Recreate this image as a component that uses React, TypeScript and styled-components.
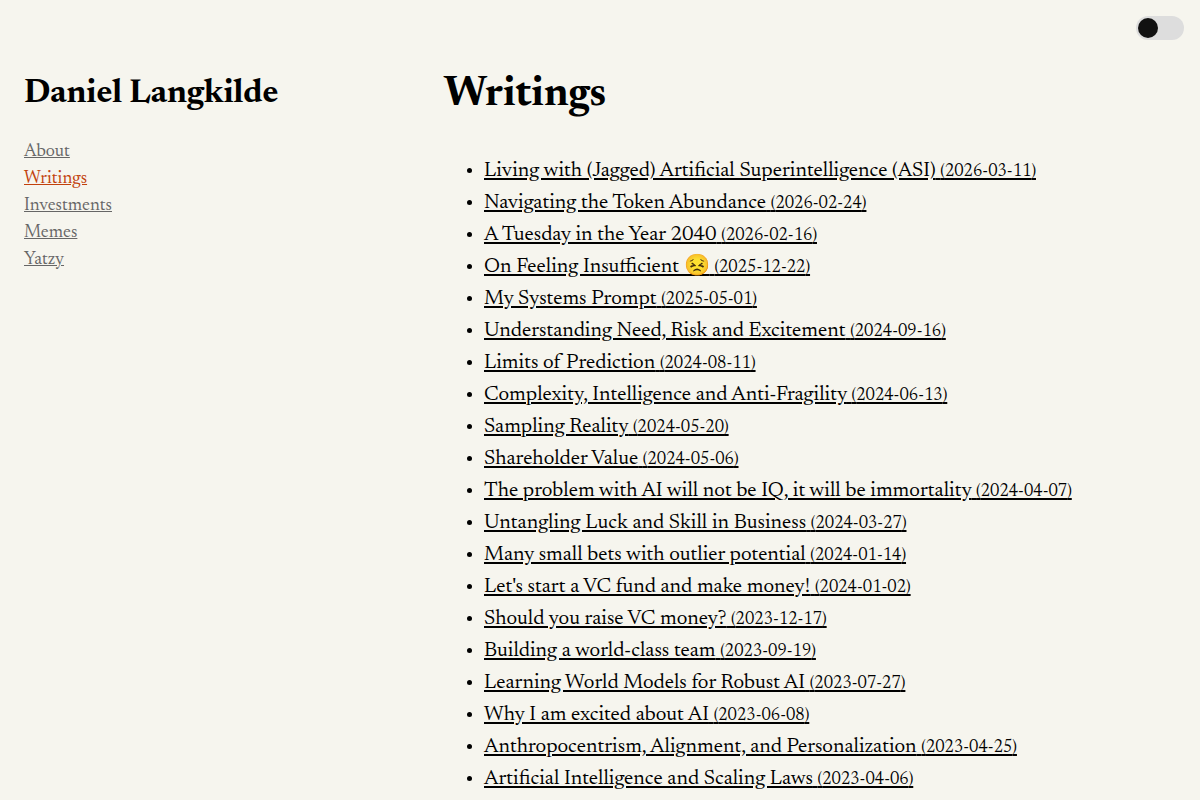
import React, { useState } from "react";
import styled, { createGlobalStyle } from "styled-components";

const GlobalStyle = createGlobalStyle`
  *, *::before, *::after { box-sizing: border-box; }
  body {
    margin: 0;
    background: #f6f5ee;
    color: #000;
    font-family: Newsreader, "Liberation Serif", serif;
    font-size: 21px;
    line-height: 32px;
  }
`;

const Page = styled.div`
  display: grid;
  grid-template-columns: 35vw 1fr;
  min-height: 100vh;
  padding: 65px 24px 0;
`;

const Sidebar = styled.aside`
  min-width: 0;
`;

const SiteName = styled.h1`
  margin: 8px 0 24px;
  font-size: 34px;
  line-height: 42px;
  font-weight: 700;
`;

const Nav = styled.nav`
  display: flex;
  flex-direction: column;
  align-items: flex-start;
`;

const NavLink = styled.a<{ $active?: boolean }>`
  color: ${(p) => (p.$active ? "#c2410c" : "#666")};
  font-size: 18px;
  line-height: 27px;
`;

const Main = styled.main`
  min-width: 0;
`;

const Title = styled.h2`
  margin: 0 0 31px;
  font-size: 42px;
  line-height: 60px;
  font-weight: 700;
`;

const List = styled.ul`
  margin: 0;
  padding-left: 40px;
`;

const Item = styled.li`
  line-height: 32px;
`;

const PostLink = styled.a`
  color: inherit;
`;

const PostDate = styled.span`
  font-size: 17px;
  line-height: 20px;
`;

const Switch = styled.label`
  position: absolute;
  top: 16px;
  right: 16px;
  display: flex;
`;

const Toggle = styled.input`
  appearance: none;
  width: 48px;
  height: 24px;
  margin: 0;
  padding: 2px;
  border-radius: 12px;
  background: #ddd;
  cursor: pointer;

  &::before {
    content: "";
    display: block;
    width: 20px;
    height: 20px;
    border-radius: 50%;
    background: #111;
  }
  &:checked::before { margin-left: auto; }
`;

const pages = ["About", "Writings", "Investments", "Memes", "Yatzy"];

const posts: [string, string][] = [
  ["Living with (Jagged) Artificial Superintelligence (ASI)", "2026-03-11"],
  ["Navigating the Token Abundance", "2026-02-24"],
  ["A Tuesday in the Year 2040", "2026-02-16"],
  ["On Feeling Insufficient 😣", "2025-12-22"],
  ["My Systems Prompt", "2025-05-01"],
  ["Understanding Need, Risk and Excitement", "2024-09-16"],
  ["Limits of Prediction", "2024-08-11"],
  ["Complexity, Intelligence and Anti-Fragility", "2024-06-13"],
  ["Sampling Reality", "2024-05-20"],
  ["Shareholder Value", "2024-05-06"],
  ["The problem with AI will not be IQ, it will be immortality", "2024-04-07"],
  ["Untangling Luck and Skill in Business", "2024-03-27"],
  ["Many small bets with outlier potential", "2024-01-14"],
  ["Let's start a VC fund and make money!", "2024-01-02"],
  ["Should you raise VC money?", "2023-12-17"],
  ["Building a world-class team", "2023-09-19"],
  ["Learning World Models for Robust AI", "2023-07-27"],
  ["Why I am excited about AI", "2023-06-08"],
  ["Anthropocentrism, Alignment, and Personalization", "2023-04-25"],
  ["Artificial Intelligence and Scaling Laws", "2023-04-06"],
];

export default function App() {
  const [dark, setDark] = useState(false);
  return (
    <>
      <GlobalStyle />
      <Switch>
        <Toggle type="checkbox" aria-label="Dark mode" checked={dark} onChange={(e) => setDark(e.target.checked)} />
      </Switch>
      <Page>
        <Sidebar>
          <SiteName>Daniel Langkilde</SiteName>
          <Nav>
            {pages.map((page) => (
              <NavLink key={page} href="#" $active={page === "Writings"}>{page}</NavLink>
            ))}
          </Nav>
        </Sidebar>
        <Main>
          <Title>Writings</Title>
          <List>
            {posts.map(([title, date]) => (
              <Item key={title}>
                <PostLink href="#">{title} <PostDate>({date})</PostDate></PostLink>
              </Item>
            ))}
          </List>
        </Main>
      </Page>
    </>
  );
}
